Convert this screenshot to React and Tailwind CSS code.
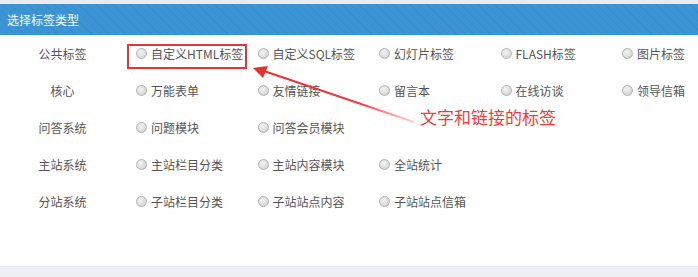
const rows = [
  { label: "公共标签", items: ["自定义HTML标签", "自定义SQL标签", "幻灯片标签", "FLASH标签", "图片标签"] },
  { label: "核心", items: ["万能表单", "友情链接", "留言本", "在线访谈", "领导信箱"] },
  { label: "问答系统", items: ["问题模块", "问答会员模块"] },
  { label: "主站系统", items: ["主站栏目分类", "主站内容模块", "全站统计"] },
  { label: "分站系统", items: ["子站栏目分类", "子站站点内容", "子站站点信箱"] },
]

function Radio() {
  return (
    <span className="inline-block w-[11px] h-[11px] shrink-0 rounded-full border border-[#b4b4b4] bg-[radial-gradient(circle_at_40%_35%,#f4f4f4_0%,#dcdcdc_60%,#c8c8c8_100%)]" />
  )
}

function TagRow({ row }) {
  return (
    <div className="flex items-center h-[37px]">
      <div className="w-[125px] shrink-0 text-center text-[#555]">{row.label}</div>
      <div className="flex shrink-0 pl-[11px]">
        {row.items.map((item) => (
          <label key={item} className="w-[121.5px] shrink-0 flex items-center gap-[4px] text-[#555] whitespace-nowrap">
            <Radio />
            <span>{item}</span>
          </label>
        ))}
      </div>
    </div>
  )
}

export default function App() {
  return (
    <div className="w-[698px] h-[277px] bg-white flex flex-col text-[12px] font-['Microsoft_YaHei','Noto_Sans_CJK_SC',sans-serif] overflow-hidden">
      <div className="h-[4px] shrink-0 bg-[#e8ebef]" />
      <div className="h-[31px] shrink-0 flex items-center pl-[7px] text-white bg-[#3b94d4] bg-[repeating-linear-gradient(45deg,rgba(255,255,255,0)_0px,rgba(255,255,255,0)_5px,rgba(0,0,0,0.05)_5px,rgba(0,0,0,0.05)_6px)]">
        选择标签类型
      </div>

      <div className="relative flex-1 overflow-hidden">
        {rows.map((row) => (
          <TagRow key={row.label} row={row} />
        ))}

        {/* annotation overlay */}
        <div className="absolute left-[127px] top-[9px] w-[120px] h-[25px] border-2 border-[#e83434]" />
        <svg className="absolute left-0 top-0" width="698" height="231" viewBox="0 35 698 231">
          <defs>
            <linearGradient id="fade" x1="415" y1="122" x2="255" y2="68" gradientUnits="userSpaceOnUse">
              <stop offset="0" stopColor="#ff6b6b" stopOpacity="0.3" />
              <stop offset="0.35" stopColor="#f03c3c" />
              <stop offset="1" stopColor="#e83030" />
            </linearGradient>
          </defs>
          <line x1="414" y1="122" x2="264" y2="71" stroke="url(#fade)" strokeWidth="2" />
          <polygon points="253,68 268,66 263,78" fill="#e83030" />
        </svg>
        <div className="absolute left-[420px] top-[73px] text-[17px] leading-none text-[#f23c3c]">
          文字和链接的标签
        </div>
      </div>

      <div className="h-[11px] shrink-0 bg-[#eff0f5] border-t border-[#e6e7ee]" />
    </div>
  )
}
